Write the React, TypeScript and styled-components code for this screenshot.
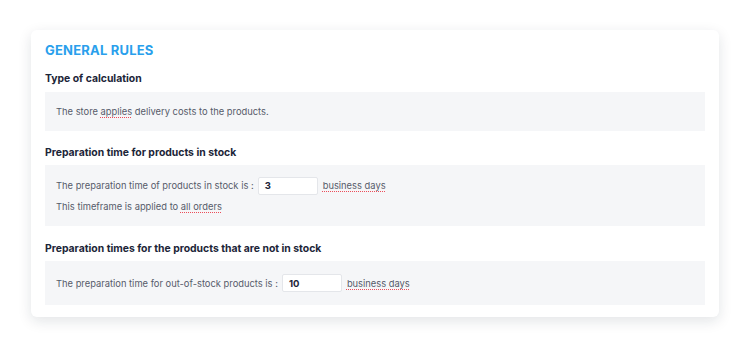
import React from "react";
import styled, { createGlobalStyle } from "styled-components";

const Global = createGlobalStyle`
  html, body { margin: 0; padding: 0; background: #ffffff; }
  body { font-family: Inter, "Noto Sans", sans-serif; }
`;

const Page = styled.div`
  width: 750px;
  height: 349px;
  padding: 30px 31px 0 31px;
  box-sizing: border-box;
`;

const Card = styled.section`
  background: #fff;
  border-radius: 6px;
  box-shadow: 0 4px 14px rgba(20, 30, 50, 0.12);
  padding: 12px 14px 12px 14px;
  display: flex;
  flex-direction: column;
`;

const Title = styled.h2`
  margin: 0;
  font-size: 13px;
  font-weight: 700;
  color: #2a9fec;
  letter-spacing: 0.2px;
  line-height: 16px;
`;

const SectionTitle = styled.h3<{ $top: number }>`
  margin: ${(p) => p.$top}px 0 0 0;
  font-size: 10.4px;
  font-weight: 700;
  color: #1c2538;
  line-height: 14px;
`;

const Box = styled.div<{ $h: number; $mt: number }>`
  margin-top: ${(p) => p.$mt}px;
  background: #f5f6f8;
  height: ${(p) => p.$h}px;
  box-sizing: border-box;
  padding: 0 11px;
  display: flex;
  flex-direction: column;
  justify-content: center;
  gap: 3px;
`;

const Line = styled.div`
  display: flex;
  align-items: center;
  font-size: 9.35px;
  color: #555b6a;
  line-height: 17px;
  white-space: pre;
`;

const Mark = styled.span`
  text-decoration-line: underline;
  text-decoration-style: dotted;
  text-decoration-color: #ec4d5a;
  text-decoration-thickness: 1px;
  text-underline-offset: 2px;
`;

const Input = styled.div`
  width: 60px;
  height: 18px;
  box-sizing: border-box;
  margin: 0 5px 0 4px;
  background: #fff;
  border: 1px solid #e4e6ea;
  border-radius: 2px;
  padding: 0 6px;
  display: flex;
  align-items: center;
  font-size: 9.5px;
  font-weight: 700;
  color: #1c2538;
`;

export default function App() {
  return (
    <Page>
      <Global />
      <Card>
        <Title>GENERAL RULES</Title>
        <SectionTitle $top={14}>Type of calculation</SectionTitle>
        <Box $h={39} $mt={6}>
          <Line>
            The store <Mark>applies</Mark> delivery costs to the products.
          </Line>
        </Box>
        <SectionTitle $top={15}>Preparation time for products in stock</SectionTitle>
        <Box $h={61} $mt={5}>
          <Line>
            The preparation time of products in stock is :
            <Input>3</Input>
            <Mark>business days</Mark>
          </Line>
          <Line>
            This timeframe is applied to <Mark>all orders</Mark>
          </Line>
        </Box>
        <SectionTitle $top={16}>Preparation times for the products that are not in stock</SectionTitle>
        <Box $h={44} $mt={5}>
          <Line>
            The preparation time for out-of-stock products is :
            <Input>10</Input>
            <Mark>business days</Mark>
          </Line>
        </Box>
      </Card>
    </Page>
  );
}
